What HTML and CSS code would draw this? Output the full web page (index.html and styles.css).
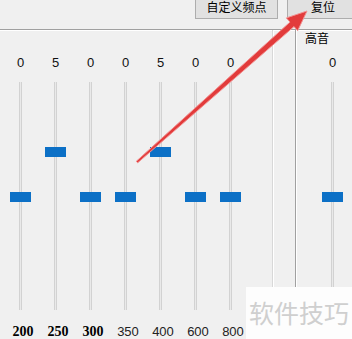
FILE: index.html
```html
<!DOCTYPE html>
<html lang="zh-CN">
<head>
    <meta charset="UTF-8">
    <meta name="viewport" content="width=device-width, initial-scale=1.0">
    <title>均衡器</title>
    <link rel="stylesheet" href="styles.css">
</head>
<body>
    <div class="toolbar">
        <button class="btn btn-custom">自定义频点</button>
        <button class="btn btn-reset">复位</button>
    </div>

    <div class="panel">
        <div class="group-main">
            <div class="bands">
                <div class="band">
                    <span class="val">0</span>
                    <div class="track"><span class="thumb" style="--v:0"></span></div>
                    <span class="freq freq-bold">200</span>
                </div>
                <div class="band">
                    <span class="val">5</span>
                    <div class="track"><span class="thumb" style="--v:5"></span></div>
                    <span class="freq freq-bold">250</span>
                </div>
                <div class="band">
                    <span class="val">0</span>
                    <div class="track"><span class="thumb" style="--v:0"></span></div>
                    <span class="freq freq-bold">300</span>
                </div>
                <div class="band">
                    <span class="val">0</span>
                    <div class="track"><span class="thumb" style="--v:0"></span></div>
                    <span class="freq">350</span>
                </div>
                <div class="band">
                    <span class="val">5</span>
                    <div class="track"><span class="thumb" style="--v:5"></span></div>
                    <span class="freq">400</span>
                </div>
                <div class="band">
                    <span class="val">0</span>
                    <div class="track"><span class="thumb" style="--v:0"></span></div>
                    <span class="freq">600</span>
                </div>
                <div class="band">
                    <span class="val">0</span>
                    <div class="track"><span class="thumb" style="--v:0"></span></div>
                    <span class="freq">800</span>
                </div>
            </div>
        </div>
        <div class="group-gap"></div>
        <div class="group-side">
            <div class="side-title">高音</div>
            <div class="bands side-bands">
                <div class="band">
                    <span class="val">0</span>
                    <div class="track"><span class="thumb" style="--v:0"></span></div>
                    <span class="freq"></span>
                </div>
            </div>
        </div>
    </div>

    <!-- red pointer arrow drawn over the screenshot -->
    <svg class="arrow" width="352" height="339" viewBox="0 0 352 339">
        <polygon points="136.3,161.3 290,22.1 286.4,17.9 307,11 297.7,30.7 294,26.6 137.7,162.8"
                 fill="#e23b3b" stroke="#f29090" stroke-width="1" stroke-linejoin="round"/>
    </svg>

    <div class="watermark">软件技巧</div>
</body>
</html>
```

FILE: styles.css
```css
body {
    margin: 0;
    width: 352px;
    height: 339px;
    overflow: hidden;
    position: relative;
    background-color: #f0f0f0;
    font-family: "Liberation Sans", Arial, "Noto Sans CJK SC", sans-serif;
    color: #000;
}
.toolbar {
    height: 19px;
    display: flex;
    justify-content: flex-end;
    align-items: flex-end;
    gap: 9px;
}
.btn {
    height: 25px;
    margin-top: -7px;
    padding: 6px 0 0;
    box-sizing: border-box;
    display: flex;
    justify-content: center;
    align-items: flex-start;
    background-color: #e1e1e1;
    border: 1px solid #adadad;
    font-family: "Noto Sans CJK SC", sans-serif;
    font-size: 12px;
    line-height: 12px;
    color: #000;
}
.btn-custom {
    width: 83px;
}
.btn-reset {
    width: 72px;
    margin-right: -7px;
}
.panel {
    margin-top: 10px;
    height: 310px;
    display: flex;
    border-top: 1px solid #a0a0a0;
    box-shadow: inset 0 1px 0 #fff;
}
.group-main {
    width: 272px;
    border-right: 1px solid #d8d8d8;
    box-shadow: 1px 0 0 #fff;
}
.group-gap {
    width: 22px;
}
.group-side {
    flex: 1;
    border-left: 1px solid #a0a0a0;
    box-shadow: inset 1px 0 0 #fff;
}
.side-title {
    margin: 1px 0 0 9px;
    height: 14px;
    font-family: "Noto Sans CJK SC", sans-serif;
    font-size: 12px;
    line-height: 14px;
}
.bands {
    display: flex;
    padding: 25px 0 0 3px;
}
.side-bands {
    padding: 10px 0 0 19px;
}
.band {
    width: 35px;
    display: flex;
    flex-direction: column;
    align-items: center;
}
.val {
    height: 16px;
    font-size: 13px;
    line-height: 16px;
    color: #111;
}
.track {
    position: relative;
    margin-top: 11px;
    width: 1px;
    height: 228px;
    background-color: #e9e9e9;
    border-left: 1px solid #d2d2d2;
    border-right: 1px solid #d2d2d2;
}
.thumb {
    position: absolute;
    left: -10px;
    top: calc(110px - var(--v) * 9px);
    width: 21px;
    height: 10px;
    background-color: #0c70c6;
}
.freq {
    margin-top: 14px;
    padding-left: 5px;
    height: 16px;
    font-size: 13px;
    line-height: 16px;
    color: #222;
}
.freq-bold {
    font-family: "Liberation Serif", "Times New Roman", serif;
    font-weight: bold;
    font-size: 14px;
    color: #000;
}
.arrow {
    position: absolute;
    left: 0;
    top: 0;
    pointer-events: none;
}
.watermark {
    position: absolute;
    left: 246px;
    top: 287px;
    width: 106px;
    height: 52px;
    box-sizing: border-box;
    padding: 8px 0 0 3px;
    background-color: #fdfdfd;
    font-family: "Noto Sans CJK SC", sans-serif;
    font-size: 25px;
    line-height: 34px;
    color: #cfcfcf;
    white-space: nowrap;
}
```
